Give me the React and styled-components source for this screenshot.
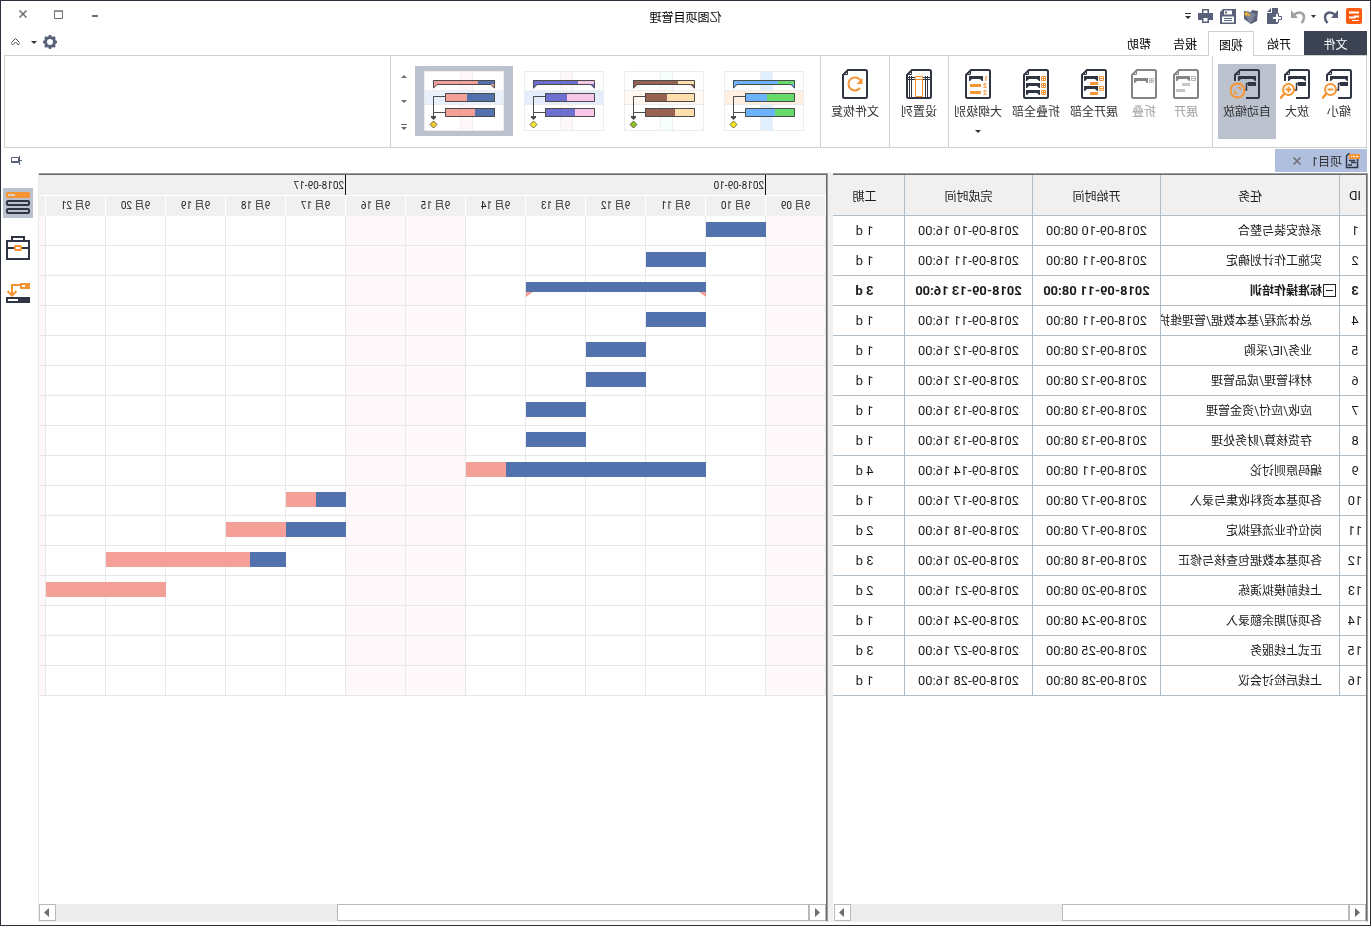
import React, { useState } from "react";
import styled, { createGlobalStyle, css } from "styled-components";

const INK = "#2f3542";
const ORANGE = "#f79433";
const SLATE = "#59617a";
const BLUE = "#5272ae";
const PINK = "#f4a098";
const DAY = 60; // width of one day column

const GlobalStyle = createGlobalStyle`
  * {
    box-sizing: border-box;
  }

  body {
    margin: 0;
    background: #fff;
    font-family: Roboto, "Noto Sans CJK SC", sans-serif;
    font-size: 12px;
    color: #1a1a1a;
    overflow: hidden;
  }

  button {
    font: inherit;
    color: inherit;
    padding: 0;
    border: 0;
    background: none;
  }

  svg {
    display: block;
    flex: none;
  }
`;

// The whole window is flipped, text included
const Window = styled.div`
  display: flex;
  flex-direction: column;
  height: 100vh;
  border: 1px solid #2b303d;
  transform: scaleX(-1);
`;

const TitleBar = styled.header`
  display: grid;
  grid-template-columns: 1fr auto 1fr;
  align-items: center;
  height: 30px;
  flex: none;
`;

const QuickBar = styled.div`
  display: flex;
  align-items: center;
  gap: 7px;
  padding-left: 8px;
`;

const QuickCaret = styled.span`
  width: 3px;
`;

const Title = styled.h1`
  margin: 0;
  font-size: 12px;
  font-weight: 400;
  color: #000;
`;

const WindowButtons = styled.div`
  display: flex;
  justify-content: flex-end;
  padding: 0 4px 4px 0;
`;

const WindowButton = styled.button`
  display: grid;
  place-items: center;
  width: 36px;
  height: 20px;
`;

const TabRow = styled.nav`
  display: flex;
  height: 24px;
  flex: none;
  padding: 0 3px;
`;

const FileButton = styled.button`
  width: 63px;
  background: #3c4353;
  color: #fff;
`;

const RibbonTab = styled.button`
  width: ${(props) => (props.$first ? 50 : 46)}px;
  color: #000;
  ${(props) =>
    props.$active &&
    css`
      border: 1px solid #d0d0d0;
      border-bottom: 0;
      background: #fff;
      margin-bottom: -1px;
      position: relative;
    `}
`;

const TabTools = styled.div`
  display: flex;
  align-items: center;
  gap: 6px;
  margin-left: auto;
  padding: 0 7px 2px 0;
`;

const IconButton = styled.button`
  display: grid;
  place-items: center;
`;

const CollapseButton = styled(IconButton)`
  padding-left: 5px;
`;

const Ribbon = styled.section`
  display: flex;
  height: 93px;
  flex: none;
  margin: 0 3px;
  padding-left: 1px;
  border: 1px solid #d0d0d0;
`;

const Group = styled.div`
  display: flex;
  align-items: flex-start;
  padding: ${(props) => props.$pad || "8px 5px 0"};
  border-right: 1px solid #d0d0d0;
`;

const Tool = styled.button`
  display: flex;
  flex-direction: column;
  align-items: center;
  gap: 4px;
  width: ${(props) => (props.$wide ? 58 : 42)}px;
  height: 75px;
  padding-top: 5px;
  line-height: 18px;
  white-space: nowrap;
  color: ${(props) => (props.disabled ? "#a0a0a0" : "#333")};
  background: ${(props) => (props.$active ? "#bbc2ce" : "none")};
`;

const ToolCaret = styled.span`
  padding-top: 5px;
`;

const ThemeButton = styled.button`
  display: grid;
  place-items: center;
  width: 98px;
  height: 70px;
  margin-right: 2px;
  background: ${(props) => (props.$active ? "#bbc2ce" : "none")};
`;

const ThemeScroll = styled.div`
  display: flex;
  flex-direction: column;
  justify-content: space-between;
  align-items: center;
  width: 17px;
  height: 65px;
  padding-top: 9px;
`;

const DocRow = styled.div`
  display: flex;
  justify-content: space-between;
  align-items: center;
  height: 25px;
  flex: none;
  padding: 1px 10px 1px 3px;
`;

const DocTab = styled.div`
  display: flex;
  align-items: center;
  width: 92px;
  height: 23px;
  padding-left: 7px;
  background: #b1bfdf;
`;

const DocName = styled.span`
  padding: 0 10px 0 3px;
  color: #333;
`;

const Main = styled.main`
  display: flex;
  flex: 1;
  min-height: 0;
  padding: 0 0 3px 2px;
`;

const Pane = styled.section`
  display: flex;
  flex-direction: column;
  min-width: 0;
  overflow: hidden;
  border-top: 1px solid #a0a0a0;
  border-left: 1px solid #a0a0a0;
  border-bottom: 1px solid #f0f0f0;
`;

const TablePane = styled(Pane)`
  width: 535px;
  flex: none;
`;

const ChartPane = styled(Pane)`
  flex: 1;
  border-right: 1px solid #ececec;
`;

const PaneBody = styled.div`
  flex: 1;
  min-height: 0;
  overflow: hidden;
  border-top: 1px solid #696969;
  border-left: 1px solid #696969;
`;

const Splitter = styled.div`
  width: 5px;
  flex: none;
  background: #f0f0f0;
`;

const Table = styled.table`
  width: 542px;
  table-layout: fixed;
  border-collapse: separate;
  border-spacing: 0;
`;

const Th = styled.th`
  width: ${(props) => props.$width}px;
  height: 41px;
  padding: 0;
  font-size: ${(props) => (props.$id ? 13 : 12)}px;
  font-weight: 400;
  padding-right: ${(props) => (props.$id ? 4 : 0)}px;
  background: #f0f0f0;
  border-right: 1px solid #b0bcc6;
  border-bottom: 1px solid #b0bcc6;
`;

const Td = styled.td`
  height: 30px;
  padding: 0;
  overflow: hidden;
  white-space: nowrap;
  text-align: center;
  font-size: 13px;
  line-height: 20px;
  font-weight: ${(props) => (props.$bold ? 700 : 400)};
  border-right: 1px solid #b0bcc6;
  border-bottom: 1px solid #b0bcc6;
`;

const IdCell = styled(Td)`
  padding-right: 4px;
`;

const TaskCell = styled(Td)`
  font-size: 12px;
  text-align: left;
`;

const TaskName = styled.div`
  display: flex;
  align-items: center;
  padding-left: ${(props) => (props.$toggle ? 3 : props.$child ? 27 : 17)}px;
`;

const Toggle = styled.button`
  display: grid;
  place-items: center;
  width: 13px;
  height: 13px;
  margin-right: 1px;
  border: 1px solid #222;
  flex: none;
`;

const WeekRow = styled.div`
  display: flex;
  height: 21px;
  padding-left: ${DAY}px;
  background: #f0f0f0;
  border-bottom: 1px solid #fff;
`;

const Week = styled.div`
  width: ${DAY * 7}px;
  flex: none;
  padding-left: 1px;
  border-left: 1px solid #111;
  font-size: 10px;
  line-height: 21px;
`;

const DayRow = styled.div`
  display: flex;
  height: 20px;
  background: #f0f0f0;
`;

const Day = styled.div`
  width: ${DAY}px;
  flex: none;
  border-left: 1px solid #fff;
  text-align: center;
  font-size: 10px;
  line-height: 20px;
`;

const ChartGrid = styled.div`
  background: repeating-linear-gradient(
      to right,
      #e6e8ec 0,
      #e6e8ec 1px,
      transparent 1px,
      transparent ${DAY}px
    ),
    repeating-linear-gradient(
      to right,
      #fff8fb 0,
      #fff8fb ${DAY}px,
      transparent ${DAY}px,
      transparent ${DAY * 6}px,
      #fff8fb ${DAY * 6}px,
      #fff8fb ${DAY * 7}px
    );
`;

const ChartRow = styled.div`
  height: 30px;
  padding-top: 6px;
  border-bottom: 1px solid #e3e6ea;
`;

const Bar = styled.div`
  width: ${(props) => props.$days * DAY}px;
  height: 15px;
  margin-left: ${(props) => props.$start * DAY}px;
  background: linear-gradient(
    to right,
    ${BLUE} ${(props) => props.$done}%,
    ${PINK} ${(props) => props.$done}%
  );
`;

const SummaryBar = styled.div`
  display: flex;
  justify-content: space-between;
  width: ${(props) => props.$days * DAY}px;
  height: 15px;
  margin-left: ${(props) => props.$start * DAY}px;
  border-top: 10px solid ${BLUE};
`;

const Corner = styled.i`
  width: 7px;
  height: 5px;
  background: ${PINK};
  clip-path: ${(props) =>
    props.$right ? "polygon(0 0, 100% 0, 100% 100%)" : "polygon(0 0, 100% 0, 0 100%)"};
`;

const ScrollBar = styled.div`
  display: flex;
  height: 17px;
  flex: none;
  margin-right: ${(props) => (props.$end ? 0 : 1)}px;
  background: #ececec;
  border-left: 1px solid #696969;
`;

const ScrollButton = styled.button`
  display: grid;
  place-items: center;
  width: 17px;
  border: 1px solid #bababa;
  background: #fff;
`;

const ScrollThumb = styled.div`
  width: ${(props) => props.$size}%;
  margin-right: auto;
  border: 1px solid #bababa;
  background: #fff;
`;

const SideBar = styled.aside`
  display: flex;
  flex-direction: column;
  gap: 15px;
  width: 37px;
  flex: none;
  padding: 15px 2px 0 5px;
`;

const SideButton = styled.button`
  display: grid;
  place-items: center;
  width: 30px;
  height: 30px;
  background: ${(props) => (props.$active ? "#bbc2ce" : "none")};
`;

/* ---------- icons ---------- */

const Caret = ({ size = 6, up, color = "#333" }) => (
  <svg width={size} height="3" viewBox="0 0 6 3" preserveAspectRatio="none" fill={color}>
    <path d={up ? "M0 3h6L3 0Z" : "M0 0h6L3 3Z"} />
  </svg>
);

const Sheet = ({ color = INK, open, children }) => (
  <svg width={open ? 34 : 26} height="30" viewBox={open ? "-4 0 34 30" : "0 0 26 30"} fill="none">
    <g stroke={color} strokeWidth="2">
      {open ? (
        <path d="M14 29H2.5Q1 29 1 27.500V2.500Q1 1 2.500 1H20l5 5v6" />
      ) : (
        <path d="M2.500 1H20l5 5v21.500q0 1.500-1.500 1.500h-21Q1 29 1 27.500v-25Q1 1 2.500 1Z" />
      )}
    </g>
    <path d="M20.500 1v4.500H25" stroke={color} />
    {children}
  </svg>
);

const Bracket = ({ x = 9, y, w = 14, color = INK }) => (
  <path
    transform={`translate(${x} ${y})`}
    d={`M0 0h${w}v5h-1l-2-2H3L1 5H0Z`}
    fill={color}
  />
);

const Box = ({ y, plus, color = ORANGE }) => (
  <path
    d={`M3.500 ${y + 0.5}h4v4h-4ZM3.500 ${y + 2.5}h4${plus ? `M5.500 ${y + 0.5}v4` : ""}`}
    stroke={color}
  />
);

const ZoomSheet = ({ kind }) => (
  <Sheet open>
    <Bracket x={4} y={7} w={18} />
    <path d="M4 13h8v4H4Z" fill={INK} />
    <path d="M12 14.500h1.500V21H16" stroke={INK} strokeWidth="1.500" />
    {kind === "auto" ? (
      <g stroke={ORANGE}>
        <circle cx="22.500" cy="21.500" r="7" fill="#bbc2ce" strokeWidth="2" />
        <path d="M19.500 21.500v-3h3M25.500 21.500v3h-3M19.500 18.500l2 2M25.500 24.500l-2-2" />
      </g>
    ) : (
      <g stroke={ORANGE} strokeWidth="2">
        <circle cx="21.500" cy="20.500" r="5.500" fill="#fff" />
        <path d="M25.500 24.500l4.500 5" strokeWidth="2.500" />
        <path d={kind === "in" ? "M18.500 20.500h6M21.500 17.500v6" : "M18.500 20.500h6"} />
      </g>
    )}
  </Sheet>
);

const icons = {
  zoomOut: <ZoomSheet kind="out" />,
  zoomIn: <ZoomSheet kind="in" />,
  zoomAuto: <ZoomSheet kind="auto" />,
  expand: (
    <Sheet color="#858585">
      <Bracket y={7} color="#858585" />
      <Box y={7} color="#b5b5b5" />
      <path d="M9 14h8v3H9ZM14 20h9v3h-9Z" fill="#c6c6c6" />
    </Sheet>
  ),
  collapse: (
    <Sheet color="#858585">
      <Bracket y={9} color="#858585" />
      <Box y={9} plus color="#b5b5b5" />
    </Sheet>
  ),
  expandAll: (
    <Sheet>
      <Bracket y={7} />
      <Bracket y={17} />
      <Box y={7} />
      <Box y={17} />
      <path d="M9 13h8v3H9ZM9 23h8v3H9Z" fill={ORANGE} />
    </Sheet>
  ),
  collapseAll: (
    <Sheet>
      {[7, 14, 21].map((y) => (
        <React.Fragment key={y}>
          <Bracket y={y} />
          <Box y={y} plus />
        </React.Fragment>
      ))}
    </Sheet>
  ),
  outline: (
    <Sheet>
      <Bracket x={8} y={7} />
      <path d="M10 15h11v3H10ZM10 22h11v3H10Z" fill={ORANGE} />
      <g fill={ORANGE} fontSize="7" fontWeight="700">
        <text x="3" y="12">1</text>
        <text x="4" y="19">2</text>
        <text x="4" y="26">2</text>
      </g>
    </Sheet>
  ),
  columns: (
    <Sheet>
      <path d="M1 8.500h24M1 10.500h24M4.500 7v22M6.500 7v22M20.500 7v22M22.500 7v22" stroke={INK} />
      <path d="M9.500 7.500h7v20h-7Z" fill="#fff" stroke={ORANGE} />
      <path d="M10 10.500h6" stroke={ORANGE} />
    </Sheet>
  ),
  restore: (
    <Sheet>
      <path d="M7.500 11.500A6.500 6.500 0 1 1 8 19" stroke={ORANGE} strokeWidth="2" />
      <path d="M5.500 9v6h6Z" fill={ORANGE} />
    </Sheet>
  ),
};

const Logo = () => (
  <svg width="16" height="16" viewBox="0 0 16 16">
    <rect width="16" height="16" rx="2" fill="#fc5b12" />
    <path d="M3 3.500h10v2H3ZM3 7.500h5v1h5v2H6.500v-1H3ZM3 12h7v1H3Z" fill="#fff" />
  </svg>
);

const UndoIcon = ({ flip, color = SLATE }) => (
  <svg width="16" height="15" viewBox="0 0 16 15" fill="none">
    <g transform={flip ? "translate(16 0) scale(-1 1)" : undefined}>
      <path d="M4 6C8 2 14 3 14 8.500c0 2-.8 3.500-2.500 5.500" stroke={color} strokeWidth="2.500" />
      <path d="M1 1v8h7Z" fill={color} />
    </g>
  </svg>
);

const NewIcon = () => (
  <svg width="17" height="16" viewBox="0 0 17 16">
    <path d="M5 0h6v5h5v11H5Z" fill={SLATE} />
    <path d="M12 0l4 4h-4Z" fill={SLATE} />
    <path d="M4.500 5.500h3v3h3v3h-3v3h-3v-3h-3v-3h3Z" fill="#fff" stroke={SLATE} />
  </svg>
);

const OpenIcon = () => (
  <svg width="16" height="15" viewBox="0 0 16 15">
    <path d="M1 2l6-1 1 2 7-1v8l-7 5-6-3Z" fill={SLATE} />
    <path d="M3 5l11-3-3 10-3 2Z" fill="#7c8499" />
    <path d="M9 8c0-3 1-4 3-4V2l3 3-3 3V6c-1 0-2 1-3 2Z" fill="#eeb030" />
  </svg>
);

const SaveIcon = () => (
  <svg width="16" height="15" viewBox="0 0 16 15">
    <path d="M0 0h13l3 3v12H0Z" fill={SLATE} />
    <path d="M4 1.500h8v4H4ZM2 7.500h12v6H2Z" fill="#fff" />
    <path d="M9 2.500h2v2H9ZM4 9h8v1H4ZM4 11h8v1H4Z" fill={SLATE} />
  </svg>
);

const PrintIcon = () => (
  <svg width="15" height="14" viewBox="0 0 15 14">
    <path d="M4 0h7v4h4v7h-4v3H4v-3H0V4h4Z" fill={SLATE} />
    <path d="M5.500 1.500h4V4h-4ZM5.500 9h4v3.500h-4Z" fill="#fff" />
  </svg>
);

const MoreIcon = ({ color = "#333" }) => (
  <svg width="6" height="7" viewBox="0 0 6 7" fill={color}>
    <path d="M0 0h6v1H0ZM0 3h6L3 6Z" />
  </svg>
);

const CloseIcon = ({ color = "#6d6d6d" }) => (
  <svg width="8" height="8" viewBox="0 0 8 8" stroke={color} strokeWidth="1.500">
    <path d="M.5.5l7 7M7.500.5l-7 7" />
  </svg>
);

const GearIcon = () => (
  <svg width="14" height="14" viewBox="0 0 14 14" fill="none" stroke={SLATE}>
    <circle cx="7" cy="7" r="4.500" strokeWidth="3" />
    <path
      d="M7 0v2M7 12v2M0 7h2M12 7h2M2 2l1.500 1.500M10.500 10.500L12 12M12 2l-1.500 1.500M3.500 10.500L2 12"
      strokeWidth="2.500"
    />
  </svg>
);

const CollapseIcon = () => (
  <svg width="9" height="8" viewBox="0 0 9 8" fill="none" stroke="#444">
    <path d="M.5 4.500l4-4 4 4M.5 5.500l1 1.500 3-3 3 3 1-1.500" />
  </svg>
);

const DocIcon = () => (
  <svg width="15" height="16" viewBox="0 0 15 16" fill="none">
    <path d="M2.500 2v12.500h11V3l-2-2H10" stroke={INK} strokeWidth="1.500" />
    <path d="M0 1h11v5H0Z" fill={ORANGE} />
    <path d="M2 3.500h7" stroke="#fff" strokeDasharray="2 1" />
    <path d="M5 7.500h6M4 9.500h5M8 12h4" stroke={INK} strokeWidth="1.500" />
  </svg>
);

const PinIcon = () => (
  <svg width="11" height="9" viewBox="0 0 11 9" fill="none" stroke={SLATE}>
    <path d="M3.500 1.500h7v5h-7ZM3 6h8M0 4.500h3M2.500 0v9" />
    <path d="M3.500 5.500h7" />
  </svg>
);

const Arrow = ({ left }) => (
  <svg width="6" height="9" viewBox="0 0 6 9" fill="#6d6d6d">
    <path d={left ? "M5 0v9L0 4.500Z" : "M1 0v9l5-4.500Z"} />
  </svg>
);

const ListIcon = () => (
  <svg width="24" height="22" viewBox="0 0 24 22" fill="none">
    <rect width="24" height="6" rx="1" fill={ORANGE} />
    <path d="M15 3h7" stroke="#d9d2cc" strokeWidth="2" />
    <g stroke={INK} strokeWidth="2">
      <rect x="1" y="9" width="22" height="4" rx="1" />
      <rect x="1" y="17" width="22" height="4" rx="1" />
    </g>
  </svg>
);

const CaseIcon = () => (
  <svg width="24" height="24" viewBox="0 0 24 24" fill="none" stroke={INK} strokeWidth="2">
    <path d="M6 5V1h12v4M1 5h22v18H1ZM1 12h22" />
    <rect x="9" y="10" width="6" height="4" rx="1" fill="#fff" stroke={ORANGE} />
  </svg>
);

const LinkIcon = () => (
  <svg width="24" height="22" viewBox="0 0 24 22" fill="none">
    <path d="M1 2h8v4H1Z" stroke={ORANGE} strokeWidth="2" />
    <path d="M0 1h5v6H0Z" fill={ORANGE} />
    <path d="M10 3h8v10M13.500 9l4.500 4.500L22.500 9" stroke={ORANGE} strokeWidth="2" />
    <path d="M1 16h22v4H1Z" stroke={INK} strokeWidth="2" />
    <path d="M1 16h11v4H1Z" fill={INK} />
  </svg>
);

const ThemeThumb = ({ theme }) => (
  <svg width="80" height="60" viewBox="0 0 80 60">
    <path d="M.5.5h79v59H.5Z" fill="#fff" stroke="#ececec" />
    <path d="M31 1h13v58H31Z" fill={theme.column} />
    <path d="M31.500 1v58M43.500 1v58" stroke="#efefef" />
    <path d="M1 20h78v14H1Z" fill={theme.row} />
    <path d="M1 19.500h78M1 33.500h78" stroke="#ececec" />
    <path d="M9 9h17v5H9Z" fill={theme.done} />
    <path d="M26 9h45v5H26Z" fill={theme.rest} />
    <path d="M9 22h28v9H9ZM9 37h20v9H9Z" fill={theme.done} />
    <path d="M37 22h22v9H37ZM29 37h30v9H29Z" fill={theme.rest} />
    <path d="M9 13h5l-5 5ZM71 13h-5l5 5Z" fill={theme.rest} />
    <g fill="none" stroke="#4b4b4b">
      <path d="M9.500 17V9.500h61V17l-3.500-3.500H13Z" />
      <path d="M9.500 22.500h49v8h-49ZM9.500 37.500h49v8h-49ZM59 25.500h11.500V47M59 41.500h11.500" />
    </g>
    <path d="M68 45h5v1.500L70.500 49 68 46.500Z" fill="#4b4b4b" />
    <path d="M70.500 50l3.500 3.500-3.500 3.500-3.500-3.500Z" fill={theme.mark} stroke="#6a6a4a" />
  </svg>
);

/* ---------- data ---------- */

const THEMES = [
  { id: "green", done: "#66da6b", rest: "#6bb3fc", column: "#e0efff", row: "#fff0e2", mark: "#fde910" },
  { id: "brown", done: "#fddfae", rest: "#986252", column: "#f6fffb", row: "#fff7f0", mark: "#8cc321" },
  { id: "violet", done: "#f8c6e6", rest: "#6d70d0", column: "#fff8fb", row: "#e5edfb", mark: "#fce934" },
  { id: "classic", done: BLUE, rest: PINK, column: "#fff8fb", row: "#e9f1fd", mark: "#fccc2e" },
];

// [name, start, finish, duration, bar: { start, days, done }]
// bar.start is counted in days from 09-09
const TASKS = [
  ["系统安装与整合", "2018-09-10", "2018-09-10", 1, { start: 1, days: 1, done: 100 }],
  ["实施工作计划确定", "2018-09-11", "2018-09-11", 1, { start: 2, days: 1, done: 100 }],
  ["标准操作培训", "2018-09-11", "2018-09-13", 3, { start: 2, days: 3, summary: true }],
  ["总体流程/基本数据/管理维护", "2018-09-11", "2018-09-11", 1, { start: 2, days: 1, done: 100, child: true }],
  ["业务/IE/采购", "2018-09-12", "2018-09-12", 1, { start: 3, days: 1, done: 100, child: true }],
  ["材料管理/成品管理", "2018-09-12", "2018-09-12", 1, { start: 3, days: 1, done: 100, child: true }],
  ["应收/应付/资金管理", "2018-09-13", "2018-09-13", 1, { start: 4, days: 1, done: 100, child: true }],
  ["存货核算/财务处理", "2018-09-13", "2018-09-13", 1, { start: 4, days: 1, done: 100, child: true }],
  ["编码原则讨论", "2018-09-11", "2018-09-14", 4, { start: 2, days: 4, done: 83.3 }],
  ["各项基本资料收集与录入", "2018-09-17", "2018-09-17", 1, { start: 8, days: 1, done: 50 }],
  ["岗位作业流程拟定", "2018-09-17", "2018-09-18", 2, { start: 8, days: 2, done: 50 }],
  ["各项基本数据包查核与修正", "2018-09-18", "2018-09-20", 3, { start: 9, days: 3, done: 20 }],
  ["上线前模拟演练", "2018-09-20", "2018-09-21", 2, { start: 11, days: 2, done: 0 }],
  ["各项初期余额录入", "2018-09-24", "2018-09-24", 1, null],
  ["正式上线服务", "2018-09-25", "2018-09-27", 3, null],
  ["上线后检讨会议", "2018-09-28", "2018-09-28", 1, null],
];

const DAYS = ["09", "10", "11", "12", "13", "14", "15", "16", "17", "18", "19", "20", "21"];

const HorizontalScroll = ({ size, end }) => (
  <ScrollBar $end={end}>
    <ScrollButton aria-label="向左滚动">
      <Arrow left />
    </ScrollButton>
    <ScrollThumb $size={size} />
    <ScrollButton aria-label="向右滚动">
      <Arrow />
    </ScrollButton>
  </ScrollBar>
);

const TaskTable = () => (
  <Table>
    <thead>
      <tr>
        <Th $width={27} $id>ID</Th>
        <Th $width={179}>任务</Th>
        <Th $width={128}>开始时间</Th>
        <Th $width={128}>完成时间</Th>
        <Th $width={80}>工期</Th>
      </tr>
    </thead>
    <tbody>
      {TASKS.map(([name, start, finish, duration, bar], i) => {
        const bold = Boolean(bar && bar.summary);
        return (
          <tr key={name}>
            <IdCell $bold={bold}>{i + 1}</IdCell>
            <TaskCell $bold={bold}>
              <TaskName $toggle={bold} $child={bar && bar.child}>
                {bold && (
                  <Toggle aria-label="折叠">
                    <svg width="7" height="1">
                      <rect width="7" height="1" fill="#222" />
                    </svg>
                  </Toggle>
                )}
                {name}
              </TaskName>
            </TaskCell>
            <Td $bold={bold}>{start} 08:00</Td>
            <Td $bold={bold}>{finish} 16:00</Td>
            <Td $bold={bold}>{duration} d</Td>
          </tr>
        );
      })}
    </tbody>
  </Table>
);

const GanttChart = () => (
  <>
    <WeekRow>
      <Week>2018-09-10</Week>
      <Week>2018-09-17</Week>
    </WeekRow>
    <DayRow>
      {DAYS.map((day) => (
        <Day key={day}>9月 {day}</Day>
      ))}
      <Day />
    </DayRow>
    <ChartGrid>
      {TASKS.map(([name, , , , bar]) => (
        <ChartRow key={name}>
          {bar && bar.summary && (
            <SummaryBar $start={bar.start} $days={bar.days}>
              <Corner />
              <Corner $right />
            </SummaryBar>
          )}
          {bar && !bar.summary && <Bar $start={bar.start} $days={bar.days} $done={bar.done} />}
        </ChartRow>
      ))}
    </ChartGrid>
  </>
);

const App = () => {
  const [tab, setTab] = useState("视图");
  const [theme, setTheme] = useState("classic");

  return (
    <>
      <GlobalStyle />
      <Window>
        <TitleBar>
          <QuickBar>
            <Logo />
            <IconButton aria-label="撤销"><UndoIcon /></IconButton>
            <QuickCaret><Caret size={5} /></QuickCaret>
            <IconButton aria-label="重做"><UndoIcon flip color="#a0a0a0" /></IconButton>
            <IconButton aria-label="新建"><NewIcon /></IconButton>
            <IconButton aria-label="打开"><OpenIcon /></IconButton>
            <IconButton aria-label="保存"><SaveIcon /></IconButton>
            <IconButton aria-label="打印"><PrintIcon /></IconButton>
            <IconButton aria-label="更多"><MoreIcon /></IconButton>
          </QuickBar>
          <Title>亿图项目管理</Title>
          <WindowButtons>
            <WindowButton aria-label="最小化">
              <svg width="6" height="6"><path d="M0 5h6" stroke="#6d6d6d" strokeWidth="2" /></svg>
            </WindowButton>
            <WindowButton aria-label="最大化">
              <svg width="9" height="9" fill="none" stroke="#6d6d6d">
                <path d="M.5 1h8v7.500h-8ZM0 1h9" />
              </svg>
            </WindowButton>
            <WindowButton aria-label="关闭"><CloseIcon /></WindowButton>
          </WindowButtons>
        </TitleBar>

        <TabRow>
          <FileButton>文件</FileButton>
          {["开始", "视图", "报告", "帮助"].map((name, i) => (
            <RibbonTab key={name} $first={i === 0} $active={tab === name} onClick={() => setTab(name)}>
              {name}
            </RibbonTab>
          ))}
          <TabTools>
            <IconButton aria-label="设置"><GearIcon /></IconButton>
            <Caret />
            <CollapseButton aria-label="收起功能区"><CollapseIcon /></CollapseButton>
          </TabTools>
        </TabRow>

        <Ribbon>
          <Group>
            <Tool>{icons.zoomOut}缩小</Tool>
            <Tool>{icons.zoomIn}放大</Tool>
            <Tool $wide $active>{icons.zoomAuto}自动缩放</Tool>
          </Group>
          <Group $pad="8px 0 0 5px">
            <Tool disabled>{icons.expand}展开</Tool>
            <Tool disabled>{icons.collapse}折叠</Tool>
            <Tool $wide>{icons.expandAll}展开全部</Tool>
            <Tool $wide>{icons.collapseAll}折叠全部</Tool>
            <Tool $wide>
              {icons.outline}大纲级别
              <ToolCaret><Caret /></ToolCaret>
            </Tool>
          </Group>
          <Group $pad="8px 0 0">
            <Tool $wide>{icons.columns}设置列</Tool>
          </Group>
          <Group>
            <Tool $wide>{icons.restore}文件恢复</Tool>
          </Group>
          <Group $pad="10px 5px 0 7px">
            {THEMES.map((item) => (
              <ThemeButton
                key={item.id}
                aria-label={item.id}
                $active={theme === item.id}
                onClick={() => setTheme(item.id)}
              >
                <ThemeThumb theme={item} />
              </ThemeButton>
            ))}
            <ThemeScroll>
              <IconButton aria-label="上一行"><Caret up color="#6d6d6d" /></IconButton>
              <IconButton aria-label="下一行"><Caret color="#6d6d6d" /></IconButton>
              <IconButton aria-label="全部主题"><MoreIcon color="#6d6d6d" /></IconButton>
            </ThemeScroll>
          </Group>
        </Ribbon>

        <DocRow>
          <DocTab>
            <DocIcon />
            <DocName>项目1</DocName>
            <IconButton aria-label="关闭项目"><CloseIcon /></IconButton>
          </DocTab>
          <IconButton aria-label="固定"><PinIcon /></IconButton>
        </DocRow>

        <Main>
          <TablePane>
            <PaneBody>
              <TaskTable />
            </PaneBody>
            <HorizontalScroll size={54} />
          </TablePane>
          <Splitter />
          <ChartPane>
            <PaneBody>
              <GanttChart />
            </PaneBody>
            <HorizontalScroll size={60} end />
          </ChartPane>
          <SideBar>
            <SideButton aria-label="任务列表" $active><ListIcon /></SideButton>
            <SideButton aria-label="资源"><CaseIcon /></SideButton>
            <SideButton aria-label="关联"><LinkIcon /></SideButton>
          </SideBar>
        </Main>
      </Window>
    </>
  );
};

export default App;
